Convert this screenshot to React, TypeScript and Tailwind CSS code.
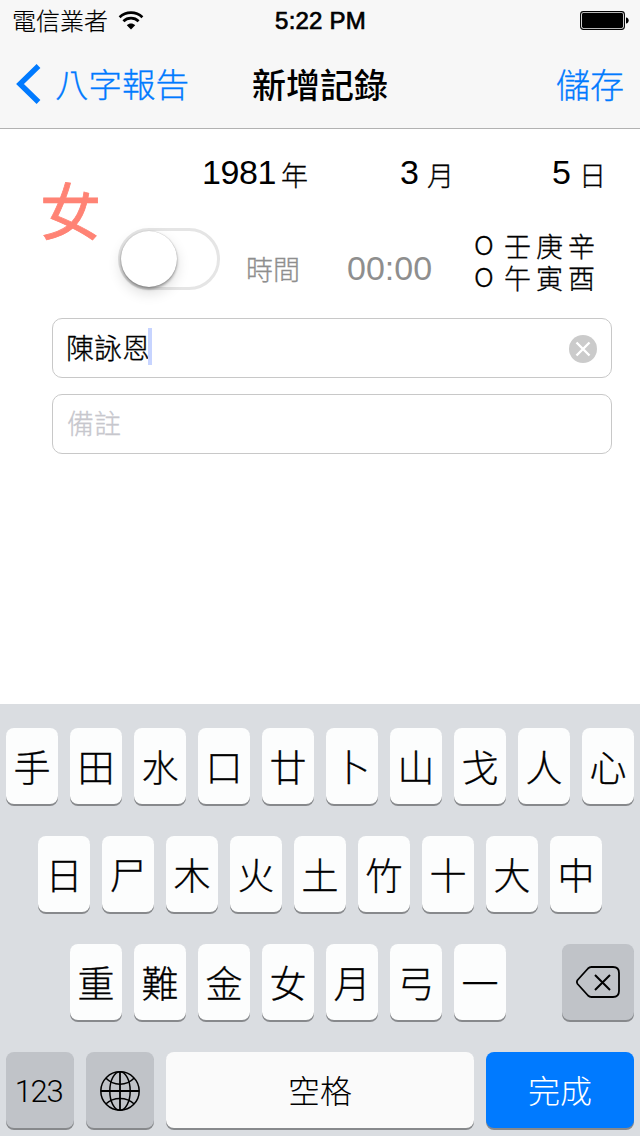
import { clsx } from 'clsx';
import type { ReactNode } from 'react';

const KEY_ROWS = [
  ['手', '田', '水', '口', '廿', '卜', '山', '戈', '人', '心'],
  ['日', '尸', '木', '火', '土', '竹', '十', '大', '中'],
  ['重', '難', '金', '女', '月', '弓', '一'],
];

const PILLARS = ['壬庚辛', '午寅酉'];

function WifiIcon() {
  return (
    <svg className="w-[26px] h-[19px]" viewBox="0 0 26 19" fill="none" stroke="#000" strokeWidth="2.7">
      <path d="M1.6 6.2C8 0.2 18 0.2 24.4 6.2" />
      <path d="M5.4 10.2C9.6 6.2 16.4 6.2 20.6 10.2" />
      <path d="M13 18.4L8.8 14.2C11.2 12 14.8 12 17.2 14.2Z" fill="#000" stroke="none" />
    </svg>
  );
}

function BatteryIcon() {
  return (
    <svg className="w-[49px] h-[19px]" viewBox="0 0 49 19">
      <rect x="0.6" y="0.6" width="43.8" height="17.8" rx="2.8" fill="none" stroke="#000" strokeWidth="1.1" />
      <rect x="2" y="2" width="41" height="15" rx="1.4" />
      <path d="M46 6.4C49.6 6.8 49.6 12.2 46 12.6Z" />
    </svg>
  );
}

function GlobeIcon() {
  return (
    <svg className="w-[40px] h-[40px] mt-[2px]" viewBox="0 0 40 40" fill="none" stroke="#000" strokeWidth="1.5">
      <circle cx="20" cy="20" r="19.2" />
      <ellipse cx="20" cy="20" rx="10.2" ry="19.2" />
      <path d="M20 1V39M1 20H39" strokeWidth="1.8" />
      <path d="M5.8 7C13.5 15.2 26.5 15.2 34.2 7M5.8 33C13.5 25.5 26.5 25.5 34.2 33" />
    </svg>
  );
}

function DeleteIcon() {
  return (
    <svg className="w-[44px] h-[32px] -ml-[1px]" viewBox="0 0 44 32" fill="none" stroke="#000" strokeWidth="1.8" strokeLinejoin="round">
      <path d="M15.5 1H37Q43 1 43 7V25Q43 31 37 31H15.5Q13.5 31 12 29.5L1.6 18Q0.2 16 1.6 14L12 2.5Q13.5 1 15.5 1Z" />
      <path d="M19 9L34 24M34 9L19 24" strokeWidth="2" />
    </svg>
  );
}

function Key({ children, className }: { children: ReactNode; className?: string }) {
  return (
    <div
      className={clsx(
        'h-[76px] rounded-[8px] flex items-center justify-center shadow-[0_2px_0_#87898c]',
        className,
      )}
    >
      {children}
    </div>
  );
}

function Letter({ char }: { char: string }) {
  return (
    <Key className="w-[52px] bg-[#fcfdfd] text-[37px] leading-none font-light">
      <span className="pt-[6px] [-webkit-text-stroke:0.3px_#000]">{char}</span>
    </Key>
  );
}

function DateUnit({ char }: { char: string }) {
  return <span className="text-[27px] font-light pt-[9px] [-webkit-text-stroke:0.3px_#000]">{char}</span>;
}

export default function App() {
  return (
    <div className="w-[640px] h-[1136px] flex flex-col bg-white text-black overflow-hidden font-['Liberation_Sans','Noto_Sans_CJK_TC',sans-serif] leading-none whitespace-nowrap">
      {/* Status bar + navigation */}
      <header className="h-[129px] shrink-0 bg-[#f7f7f7] border-b border-[#b2b2b2]">
        <div className="h-10 grid grid-cols-3 items-center pl-[12px] pr-[11px]">
          <div className="flex items-center gap-[10px]">
            <span className="text-[24px] font-light pt-[3px] [-webkit-text-stroke:0.2px_#000]">電信業者</span>
            <WifiIcon />
          </div>
          <span className="text-center text-[24px] tracking-[0.2px] pt-[2px] [-webkit-text-stroke:0.7px_#000]">5:22 PM</span>
          <div className="flex justify-end">
            <BatteryIcon />
          </div>
        </div>
        <div className="h-[88px] grid grid-cols-3 items-center px-4 text-[34px]">
          <div className="flex items-center gap-[14px] text-[#007aff]">
            <svg className="w-[25px] h-[40px]" viewBox="0 0 25 40" fill="none" stroke="currentColor" strokeWidth="5.4">
              <path d="M22.5 2L4 20L22.5 38" />
            </svg>
            <span className="font-light text-[33.5px] pt-[3px] [-webkit-text-stroke:0.3px_#007aff]">八字報告</span>
          </div>
          <span className="text-center font-medium pt-[3px]">新增記錄</span>
          <span className="text-right font-light text-[#007aff] pt-[3px] [-webkit-text-stroke:0.3px_#007aff]">儲存</span>
        </div>
      </header>

      {/* Record form */}
      <main className="flex-1">
        <div className="flex h-[189px] pl-[40px]">
          <div className="w-[60px] pt-[55px] text-[61px] text-[#ff8375] [-webkit-text-stroke:0.8px_#ff8375]">女</div>
          <div className="flex-1">
            <div className="flex items-start h-[90px] pt-[26px] text-[34px]">
              <div className="w-[200px] pl-[102px] flex items-start gap-[5px]">
                <span className="tracking-[-0.4px]">1981</span>
                <DateUnit char="年" />
              </div>
              <div className="w-[152px] pl-[100px] flex items-start gap-[8px]">
                <span>3</span>
                <DateUnit char="月" />
              </div>
              <div className="pl-[100px] flex items-start gap-[8px]">
                <span>5</span>
                <DateUnit char="日" />
              </div>
            </div>
            <div className="flex pl-[18px]">
              <div className="mt-[9px] w-[102px] h-[62px] rounded-full border-[3px] border-[#e5e5e5]">
                <div className="w-[56px] h-[56px] rounded-full bg-white shadow-[0_6px_14px_rgba(0,0,0,0.14),0_2px_3px_rgba(0,0,0,0.35),0_0_1px_rgba(0,0,0,0.3)]" />
              </div>
              <div className="flex items-baseline pt-[32px] pl-[26px] text-[#8e8e8e]">
                <span className="text-[27px] font-light [-webkit-text-stroke:0.3px_#8e8e8e]">時間</span>
                <span className="text-[34px] pl-[47px]">00:00</span>
              </div>
              <div className="pt-[13px] pl-[42px] text-[27px] leading-[32px] tracking-[5px] font-light [-webkit-text-stroke:0.3px_#000]">
                {PILLARS.map(p => (
                  <div key={p} className="flex gap-[4px]">
                    <span className="w-[26px] -mt-[2px] font-['Inter',sans-serif] text-[26px]">O</span>
                    <span>{p}</span>
                  </div>
                ))}
              </div>
            </div>
          </div>
        </div>

        <div className="flex flex-col gap-4 pl-[52px] pr-[28px] text-[28px] font-light">
          <div className="h-[60px] rounded-[10px] border border-[#c8c8c8] flex items-center pl-[13px] pr-[14px]">
            <span className="pt-[3px] [-webkit-text-stroke:0.3px_#000]">陳詠恩</span>
            <span className="w-[4px] h-[37px] bg-[#c7d4ff] -ml-[2px] -mt-[3px]" />
            <svg className="ml-auto mt-[1px] w-[28px] h-[28px]" viewBox="0 0 28 28">
              <circle cx="14" cy="14" r="14" fill="#cbcbcb" />
              <path d="M7.5 7.5L20.5 20.5M20.5 7.5L7.5 20.5" stroke="#fff" strokeWidth="2.4" />
            </svg>
          </div>
          <div className="h-[60px] rounded-[10px] border border-[#c8c8c8] flex items-center pl-[14px] text-[27px] text-[#c7c7cd]">
            <span className="pt-[3px] [-webkit-text-stroke:0.3px_#c7c7cd]">備註</span>
          </div>
        </div>
      </main>

      {/* Cangjie keyboard */}
      <div className="h-[432px] shrink-0 bg-[#dadde1] px-[6px] pt-6 flex flex-col gap-8">
        <div className="flex gap-3">
          {KEY_ROWS[0].map(c => <Letter key={c} char={c} />)}
        </div>
        <div className="flex gap-3 pl-8">
          {KEY_ROWS[1].map(c => <Letter key={c} char={c} />)}
        </div>
        <div className="flex gap-3 pl-16">
          {KEY_ROWS[2].map(c => <Letter key={c} char={c} />)}
          <Key className="ml-auto w-[72px] bg-[#c0c3c8]">
            <DeleteIcon />
          </Key>
        </div>
        <div className="flex gap-3 text-[32px] font-light">
          <Key className="w-[68px] bg-[#c0c3c8] font-['Roboto',sans-serif]">
            <span className="text-[31px] tracking-[-1.4px] pt-[2px] pr-[3px]">123</span>
          </Key>
          <Key className="w-[68px] bg-[#c0c3c8]">
            <GlobeIcon />
          </Key>
          <Key className="w-[308px] bg-[#fafafa]">
            <span className="pt-[4px]">空格</span>
          </Key>
          <Key className="w-[148px] bg-[#007aff] text-white">
            <span className="pt-[4px]">完成</span>
          </Key>
        </div>
      </div>
    </div>
  );
}
